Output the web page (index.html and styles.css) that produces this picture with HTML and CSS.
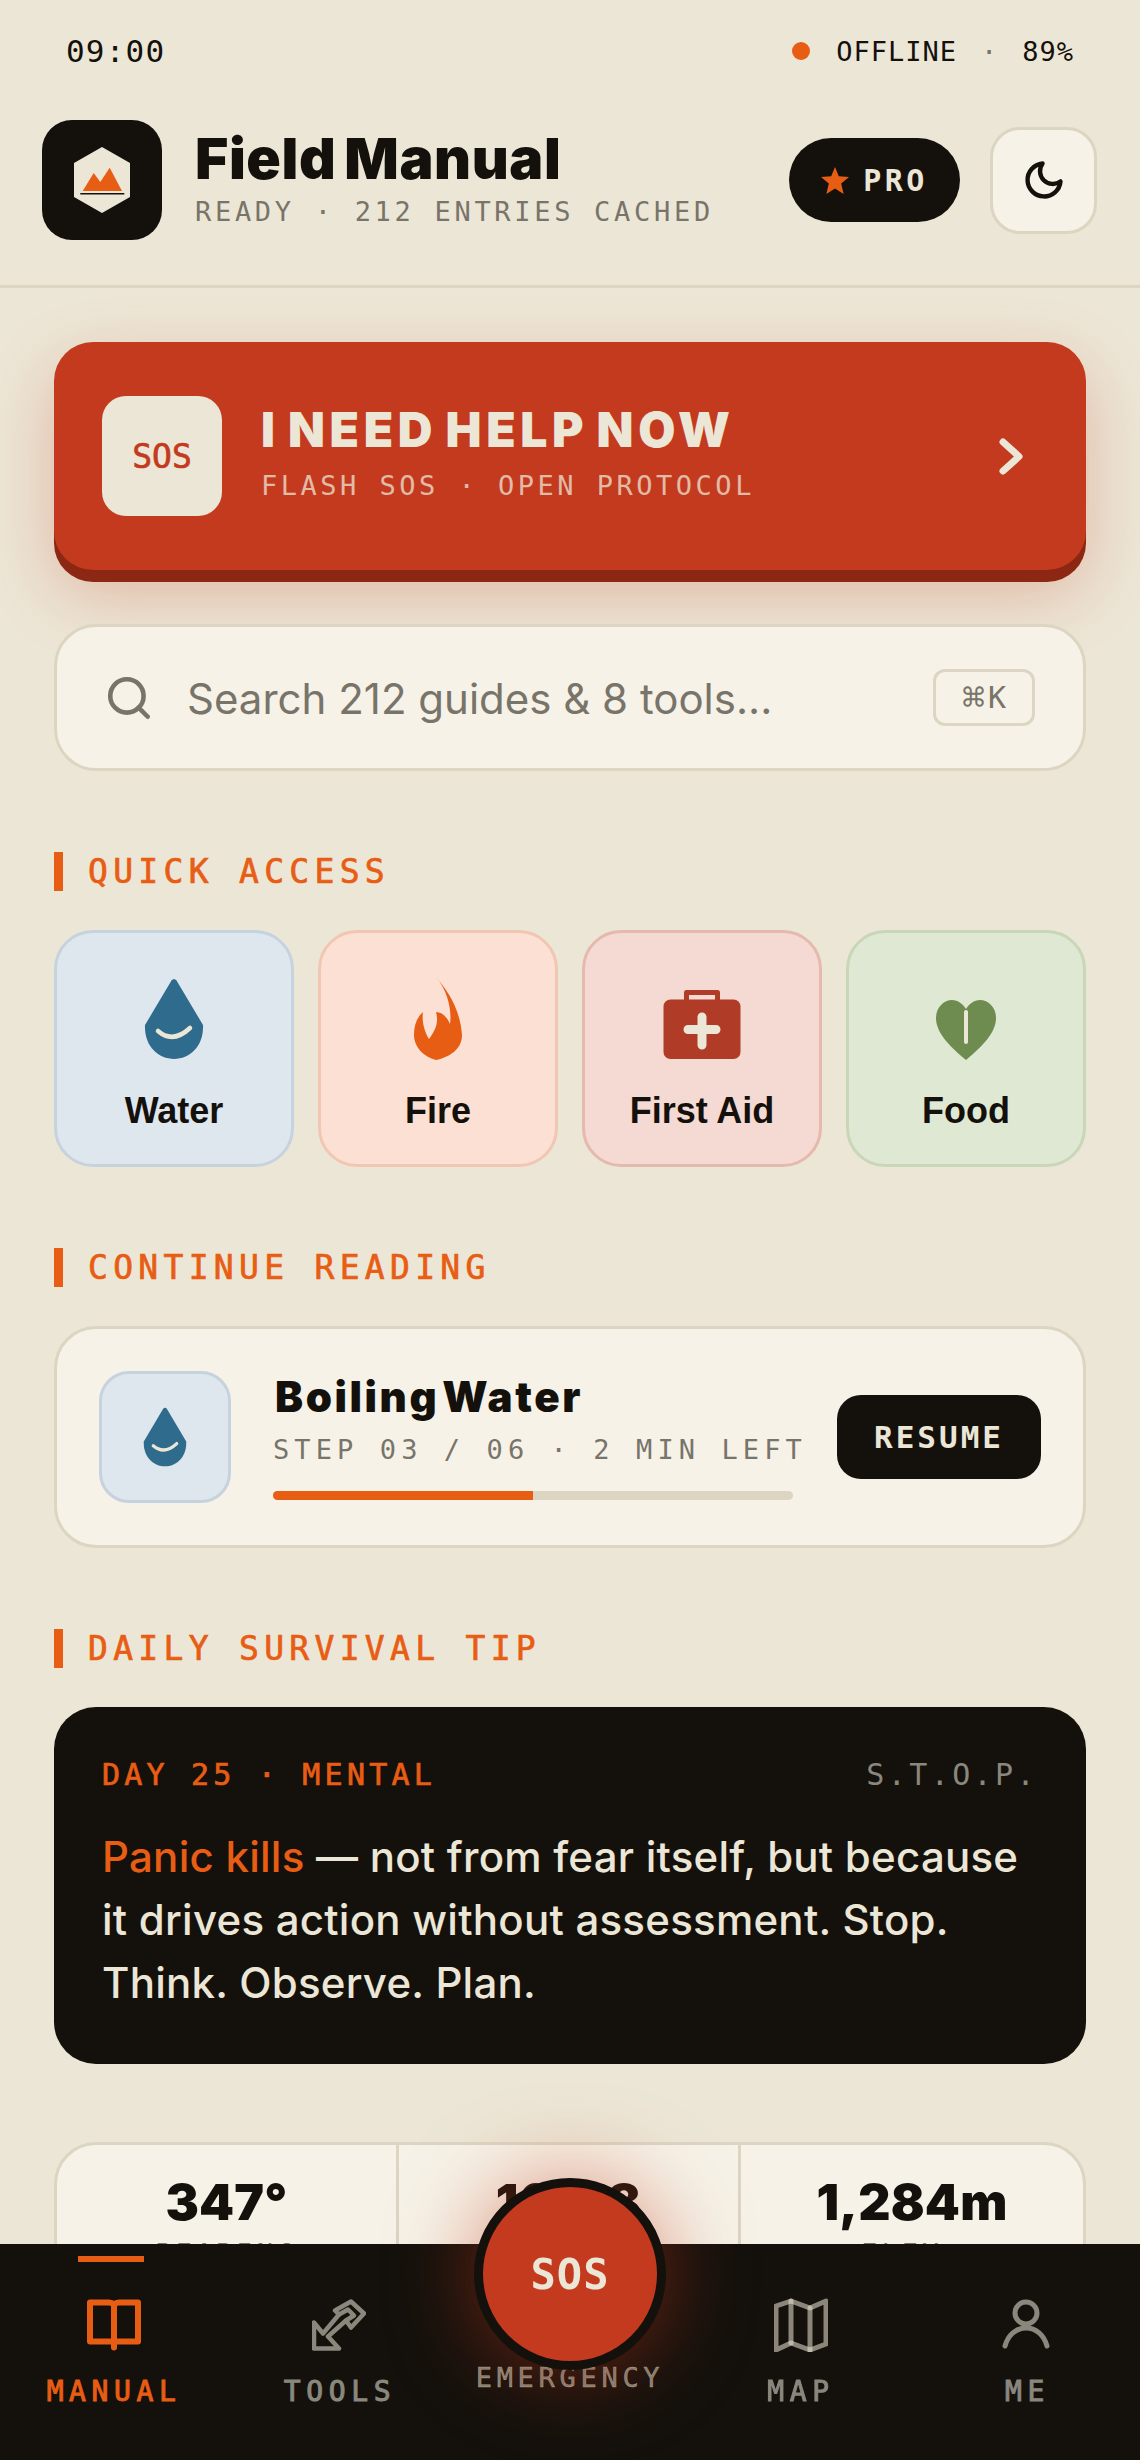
FILE: index.html
```html
<!DOCTYPE html>
<html lang="en">
<head>
  <meta charset="UTF-8">
  <meta name="viewport" content="width=device-width, initial-scale=1.0">
  <title>Field Manual</title>
  <link rel="stylesheet" href="styles.css">
</head>
<body>
  <div class="status-bar">
    <span class="time">09:00</span>
    <div class="status-right">
      <span class="status-dot"></span>
      <span>OFFLINE</span>
      <span class="status-sep">·</span>
      <span>89%</span>
    </div>
  </div>

  <header class="header">
    <div class="logo">
      <svg width="56" height="66" viewBox="0 0 56 66">
        <polygon points="28,0 56,16 56,50 28,66 0,50 0,16" fill="#ece6d6"/>
        <polygon points="8.7,44 19.7,26 26.3,35 35.7,20.7 48,44" fill="#e85d14"/>
        <rect x="6.3" y="46" width="44" height="1.5" fill="#14110c"/>
      </svg>
    </div>
    <div class="brand">
      <h1>Field Manual</h1>
      <p>READY · 212 ENTRIES CACHED</p>
    </div>
    <div class="pro-pill">
      <svg width="28" height="27" viewBox="0 0 28 27">
        <polygon points="14,0 17.8,9.2 28,10 20.2,16.5 22.6,27 14,21.4 5.4,27 7.8,16.5 0,10 10.2,9.2" fill="#e85d14"/>
      </svg>
      <span>PRO</span>
    </div>
    <div class="theme-btn">
      <svg width="44" height="44" viewBox="0 0 24 24" fill="none" stroke="#14110c" stroke-width="2.4" stroke-linejoin="round">
        <path d="M21 12.79A9 9 0 1 1 11.21 3 7 7 0 0 0 21 12.79z"/>
      </svg>
    </div>
  </header>

  <main class="content">
    <div class="sos-card">
      <div class="sos-badge">SOS</div>
      <div class="sos-text">
        <div class="sos-title">I NEED HELP NOW</div>
        <div class="sos-sub">FLASH SOS · OPEN PROTOCOL</div>
      </div>
      <svg class="sos-arrow" width="27" height="39" viewBox="0 0 27 39" fill="none" stroke="#ece6d6" stroke-width="7" stroke-linecap="round" stroke-linejoin="round">
        <polyline points="5,5 21,19.5 5,34"/>
      </svg>
    </div>

    <div class="search">
      <svg width="50" height="50" viewBox="0 0 24 24" fill="none" stroke="#78746a" stroke-width="2.2" stroke-linecap="round">
        <circle cx="11" cy="11" r="8"/>
        <line x1="21" y1="21" x2="16.6" y2="16.6"/>
      </svg>
      <span class="search-text">Search 212 guides &amp; 8 tools...</span>
      <span class="kbd"><span class="kbd-cmd">⌘</span>K</span>
    </div>

    <h2 class="section-head">QUICK ACCESS</h2>
    <div class="tiles">
      <div class="tile tile-water">
        <div class="tile-icon">
          <svg width="60" height="82" viewBox="0 0 60 82">
            <path d="M27.5 2.5 Q30 -0.5 32.5 2.5 L59 47 C60 68 46 81 30 81 C14 81 0 68 1 47 Z" fill="#2e6b8c"/>
            <path d="M14 53 Q29 66 46 50" fill="none" stroke="#ece6d6" stroke-width="4.5" stroke-linecap="round"/>
          </svg>
        </div>
        <span>Water</span>
      </div>
      <div class="tile tile-fire">
        <div class="tile-icon">
          <svg width="48" height="83" viewBox="0 0 48 83">
            <path d="M22 0 C32 12 46 30 48 58 C48 72 36 80 22 83 C10 80 0 70 0 58 C0 48 3 40 9 35 C8 42 9 52 15 62 C21 54 25 46 22 35 C28 35 33 40 36 47 C38 34 34 14 22 0 Z" fill="#e85d14"/>
          </svg>
        </div>
        <span>Fire</span>
      </div>
      <div class="tile tile-aid">
        <div class="tile-icon">
          <svg width="78" height="70" viewBox="0 0 78 70">
            <rect x="21" y="0" width="36" height="14" rx="2.5" fill="#b03c28"/>
            <rect x="26" y="5" width="26" height="5" fill="#f5d9d3"/>
            <rect x="0.5" y="9.5" width="77" height="59.5" rx="7" fill="#b03c28"/>
            <path d="M39 27V55M25 39.500H53" fill="none" stroke="#ece6d6" stroke-width="9" stroke-linecap="round"/>
          </svg>
        </div>
        <span>First Aid</span>
      </div>
      <div class="tile tile-food">
        <div class="tile-icon">
          <svg width="60" height="60" viewBox="0 0 60 60">
            <path d="M30 60 C12 45 0 32 0 18 C0 7 8 0 16 0 C22 0 27 4 30 9 C33 4 38 0 44 0 C52 0 60 7 60 18 C60 32 48 45 30 60Z" fill="#6e8c50"/>
            <line x1="30" y1="12" x2="30" y2="42" stroke="#ece6d6" stroke-width="4" stroke-linecap="round"/>
          </svg>
        </div>
        <span>Food</span>
      </div>
    </div>

    <h2 class="section-head">CONTINUE READING</h2>
    <div class="resume-card">
      <div class="thumb">
        <svg width="44" height="60" viewBox="0 0 60 82">
          <path d="M27.5 2.5 Q30 -0.5 32.5 2.5 L59 47 C60 68 46 81 30 81 C14 81 0 68 1 47 Z" fill="#2e6b8c"/>
          <path d="M14 53 Q29 66 46 50" fill="none" stroke="#ece6d6" stroke-width="4.5" stroke-linecap="round"/>
        </svg>
      </div>
      <div class="resume-info">
        <div class="resume-title">Boiling Water</div>
        <div class="resume-sub">STEP 03 / 06 · 2 MIN LEFT</div>
        <div class="progress"><div class="progress-fill"></div></div>
      </div>
      <div class="resume-btn">RESUME</div>
    </div>

    <h2 class="section-head">DAILY SURVIVAL TIP</h2>
    <div class="tip-card">
      <div class="tip-top">
        <span class="tip-day">DAY 25 · MENTAL</span>
        <span class="tip-tag">S.T.O.P.</span>
      </div>
      <p class="tip-body"><span class="tip-hl">Panic kills</span> — not from fear itself, but because it drives action without assessment. Stop. Think. Observe. Plan.</p>
    </div>

    <div class="stats">
      <div class="stat"><div class="stat-val">347°</div><div class="stat-label">BEARING</div></div>
      <div class="stat"><div class="stat-val">16:08</div><div class="stat-label">SUNSET</div></div>
      <div class="stat"><div class="stat-val">1,284m</div><div class="stat-label">ELEV.</div></div>
    </div>
  </main>

  <nav class="nav">
    <div class="nav-item active">
      <span class="nav-mark"></span>
      <svg width="54" height="51" viewBox="0 0 54 51" fill="none" stroke="#e85d14" stroke-width="6" stroke-linejoin="round" stroke-linecap="round">
        <path d="M3 3H22Q25 3 27 5Q29 3 32 3H51V42H3Z"/>
        <line x1="27" y1="5" x2="27" y2="48"/>
      </svg>
      <span class="nav-label">MANUAL</span>
    </div>
    <div class="nav-item nav-tools">
      <svg width="54" height="51" viewBox="0 0 54 51" fill="none" stroke="#8a877d" stroke-width="4.5" stroke-linejoin="round" stroke-linecap="round">
        <path d="M2 49V23L11 34L27 15L23 11L39 2L52 14L39 28L34 21L16 37L27 49Z"/>
        <path d="M27 15L36 10L42 16L34 21"/>
      </svg>
      <span class="nav-label">TOOLS</span>
    </div>
    <div class="nav-item nav-sos">
      <div class="fab">SOS</div>
      <span class="nav-label">EMERGENCY</span>
    </div>
    <div class="nav-item nav-map">
      <svg width="54" height="54" viewBox="0 0 54 54" fill="none" stroke="rgba(236,230,214,.55)" stroke-width="5" stroke-linejoin="round" stroke-linecap="round">
        <path d="M2 8L17 3L36 10L52 3V46L36 52L17 45L2 52Z"/>
        <line x1="17" y1="3" x2="17" y2="45"/>
        <line x1="36" y1="10" x2="36" y2="52"/>
      </svg>
      <span class="nav-label">MAP</span>
    </div>
    <div class="nav-item nav-me">
      <svg width="48" height="54" viewBox="0 0 48 54" fill="none" stroke="#8a877d" stroke-width="5" stroke-linecap="round">
        <circle cx="24" cy="15" r="11"/>
        <path d="M3 48C6 37 14 30 24 30C34 30 42 37 45 48"/>
      </svg>
      <span class="nav-label">ME</span>
    </div>
  </nav>
</body>
</html>
```

FILE: styles.css
```css
:root {
  --ink: #14110c;
  --paper: #ece6d6;
  --card: #f6f2e7;
  --line: #dcd5c2;
  --muted: #78746a;
  --orange: #e85d14;
  --red: #c43a1e;
  --heavy: "Inter", "Liberation Sans", sans-serif;
  --mono: "DejaVu Sans Mono", monospace;
}
* {
  box-sizing: border-box;
}
html, body {
  margin: 0;
  padding: 0;
}
body {
  height: 2460px;
  overflow: hidden;
  background: var(--paper);
  color: var(--ink);
  font-family: "Inter", "Liberation Sans", sans-serif;
}

/* status bar */
.status-bar {
  height: 102px;
  padding: 0 66px;
  display: flex;
  justify-content: space-between;
  align-items: center;
  font-family: var(--mono);
}
.time {
  font-size: 31px;
  letter-spacing: 1.2px;
}
.status-right {
  display: flex;
  align-items: center;
  font-size: 27px;
  letter-spacing: 1px;
}
.status-dot {
  width: 18px;
  height: 18px;
  border-radius: 50%;
  background: var(--orange);
  margin-right: 26px;
}
.status-sep {
  margin: 0 24px;
  color: var(--muted);
}

/* header */
.header {
  height: 186px;
  padding: 21px 43px 48px 42px;
  border-bottom: 3px solid var(--line);
  display: flex;
  align-items: center;
}
.logo {
  width: 120px;
  height: 120px;
  border-radius: 30px;
  background: var(--ink);
  display: flex;
  align-items: center;
  justify-content: center;
}
.brand {
  margin-left: 33px;
  padding-bottom: 3px;
  flex: 1;
}
.brand h1 {
  margin: 0;
  font-family: var(--heavy);
  font-weight: 900;
  font-size: 57px;
  line-height: 60px;
  letter-spacing: .6px;
  word-spacing: -4px;
}
.brand p {
  margin: 7px 0 0;
  font-family: var(--mono);
  font-size: 27px;
  line-height: 32px;
  letter-spacing: 3.7px;
  white-space: nowrap;
  color: var(--muted);
}
.pro-pill {
  width: 171px;
  height: 84px;
  border-radius: 42px;
  background: var(--ink);
  color: var(--paper);
  display: flex;
  align-items: center;
  justify-content: center;
  gap: 14px;
  font-family: var(--mono);
  font-weight: 700;
  font-size: 30px;
  letter-spacing: 3.5px;
}
.theme-btn {
  width: 107px;
  height: 107px;
  margin-left: 30px;
  border-radius: 30px;
  border: 3px solid var(--line);
  background: var(--card);
  display: flex;
  align-items: center;
  justify-content: center;
}

/* main column */
.content {
  padding: 54px 54px 0;
}

.sos-card {
  height: 228px;
  border-radius: 39px;
  background: var(--red);
  box-shadow: 0 12px 0 #8b2712, 0 24px 66px rgba(196, 58, 30, .28);
  padding: 0 61px 0 48px;
  display: flex;
  align-items: center;
}
.sos-badge {
  width: 120px;
  height: 120px;
  border-radius: 24px;
  background: var(--paper);
  color: var(--red);
  display: flex;
  align-items: center;
  justify-content: center;
  font-family: var(--mono);
  font-size: 33px;
  -webkit-text-stroke: .7px var(--red);
}
.sos-text {
  margin-left: 39px;
  padding-bottom: 11px;
  flex: 1;
}
.sos-title {
  font-family: var(--heavy);
  font-weight: 900;
  font-size: 48px;
  line-height: 60px;
  letter-spacing: 4.7px;
  word-spacing: -6px;
  color: var(--paper);
}
.sos-sub {
  margin-top: 10px;
  font-family: var(--mono);
  font-size: 27px;
  line-height: 32px;
  letter-spacing: 3.5px;
  white-space: nowrap;
  color: rgba(236, 230, 214, .75);
}

.search {
  height: 147px;
  margin-top: 54px;
  padding: 0 48px 0 47px;
  border-radius: 42px;
  border: 3px solid var(--line);
  background: var(--card);
  display: flex;
  align-items: center;
  color: var(--muted);
}
.search-text {
  margin-left: 33px;
  padding-top: 2px;
  flex: 1;
  font-size: 42px;
}
.kbd {
  width: 102px;
  height: 57px;
  border-radius: 12px;
  border: 3px solid var(--line);
  display: flex;
  align-items: center;
  justify-content: center;
  gap: 3px;
  font-family: var(--mono);
  font-size: 30px;
}
.kbd-cmd {
  font-size: 38px;
  line-height: 1;
}

.section-head {
  margin: 81px 0 39px;
  height: 39px;
  border-left: 9px solid var(--orange);
  padding-left: 25px;
  font-family: var(--mono);
  font-weight: 400;
  font-size: 33px;
  line-height: 39px;
  letter-spacing: 5.3px;
  color: var(--orange);
  -webkit-text-stroke: .7px var(--orange);
}

.tiles {
  display: grid;
  grid-template-columns: repeat(4, 1fr);
  gap: 24px;
}
.tile {
  height: 237px;
  border-radius: 39px;
  border-width: 3px;
  border-style: solid;
  display: flex;
  flex-direction: column;
  align-items: center;
  font-family: "Liberation Sans", sans-serif;
  font-weight: 700;
  font-size: 36px;
}
.tile-icon {
  height: 127px;
  display: flex;
  align-items: flex-end;
}
.tile span {
  margin-top: 30px;
}
.tile-water { background: #dfe7ee; border-color: #c6d3de; }
.tile-fire { background: #fce0d3; border-color: #f1c7b3; }
.tile-aid { background: #f5d9d3; border-color: #e6b9af; }
.tile-food { background: #dfe8d3; border-color: #c9d6b7; }

.resume-card {
  height: 222px;
  padding: 0 42px;
  border-radius: 42px;
  border: 3px solid var(--line);
  background: var(--card);
  display: flex;
  align-items: center;
}
.thumb {
  width: 132px;
  height: 132px;
  border-radius: 30px;
  border: 3px solid #c6d3de;
  background: #dfe7ee;
  display: flex;
  align-items: center;
  justify-content: center;
}
.resume-info {
  margin-left: 42px;
  padding-top: 2px;
  flex: 1;
  min-width: 0;
}
.resume-title {
  margin-left: 2px;
  font-family: var(--heavy);
  font-weight: 900;
  font-size: 42px;
  line-height: 42px;
  letter-spacing: 2.6px;
  word-spacing: -8px;
}
.resume-sub {
  margin-top: 14px;
  font-family: var(--mono);
  font-size: 27px;
  line-height: 36px;
  letter-spacing: 5.1px;
  white-space: nowrap;
  color: var(--muted);
}
.progress {
  width: 520px;
  height: 9px;
  margin-top: 23px;
  border-radius: 5px;
  background: var(--line);
  overflow: hidden;
}
.progress-fill {
  width: 50%;
  height: 100%;
  background: var(--orange);
}
.resume-btn {
  width: 204px;
  height: 84px;
  border-radius: 24px;
  background: var(--ink);
  color: var(--paper);
  display: flex;
  align-items: center;
  justify-content: center;
  font-family: var(--mono);
  font-weight: 700;
  font-size: 31px;
  letter-spacing: 3px;
}

.tip-card {
  height: 357px;
  padding: 48px 48px 0;
  border-radius: 42px;
  background: var(--ink);
}
.tip-top {
  display: flex;
  justify-content: space-between;
  font-family: var(--mono);
  font-size: 30px;
  line-height: 39px;
  letter-spacing: 4.2px;
}
.tip-day {
  color: var(--orange);
  -webkit-text-stroke: .7px var(--orange);
}
.tip-tag {
  letter-spacing: 3.4px;
  color: #8a877d;
}
.tip-body {
  margin: 31px 0 0;
  font-size: 42px;
  font-weight: 500;
  line-height: 63px;
  letter-spacing: .25px;
  color: var(--paper);
}
.tip-hl {
  color: var(--orange);
}

.stats {
  margin-top: 78px;
  display: grid;
  grid-template-columns: repeat(3, 1fr);
  border: 3px solid var(--line);
  border-radius: 42px;
  background: var(--card);
}
.stat {
  padding: 27px 0 30px;
  text-align: center;
}
.stat:not(:last-child) {
  border-right: 3px solid var(--line);
}
.stat-val {
  font-family: var(--heavy);
  font-weight: 900;
  font-size: 50px;
  line-height: 60px;
  letter-spacing: .2px;
}
.stat-label {
  margin-top: 6px;
  font-family: var(--mono);
  font-size: 27px;
  letter-spacing: 4px;
  color: var(--muted);
}

/* bottom nav */
.nav {
  position: fixed;
  left: 0;
  right: 0;
  bottom: 0;
  height: 216px;
  background: var(--ink);
  display: grid;
  grid-template-columns: repeat(5, 1fr);
}
.nav-item {
  position: relative;
  padding-top: 54px;
  display: flex;
  flex-direction: column;
  align-items: center;
}
.nav-item svg {
  height: 54px;
}
.nav-tools svg {
  margin-right: 6px;
}
.nav-map svg {
  margin-left: 6px;
}
.nav-label {
  margin-top: 24px;
  font-family: var(--mono);
  font-size: 28px;
  line-height: 32px;
  letter-spacing: 5.6px;
  color: #8a877d;
  -webkit-text-stroke: 1px #8a877d;
}
.nav-tools .nav-label {
  margin-right: 4px;
}
.nav-map .nav-label {
  margin-left: 6px;
}
.nav-me .nav-label {
  margin-left: 3px;
}
.nav-mark {
  position: absolute;
  left: 78px;
  top: 12px;
  width: 66px;
  height: 6px;
  background: var(--orange);
}
.active .nav-label {
  color: var(--orange);
  -webkit-text-stroke: 1px var(--orange);
}
.nav-sos {
  padding-top: 118px;
}
.nav-sos .nav-label {
  margin-top: 0;
  font-size: 27px;
  letter-spacing: 4.7px;
  color: rgba(236, 230, 214, .55);
  -webkit-text-stroke: .4px rgba(236, 230, 214, .55);
}
.fab {
  position: absolute;
  left: 18px;
  top: -66px;
  width: 192px;
  height: 192px;
  border-radius: 50%;
  border: 9px solid var(--ink);
  background: var(--red);
  box-shadow: 0 0 84px rgba(196, 58, 30, .5);
  display: flex;
  align-items: center;
  justify-content: center;
  color: var(--paper);
  font-family: var(--mono);
  font-weight: 700;
  font-size: 42px;
  letter-spacing: 1px;
}
```
